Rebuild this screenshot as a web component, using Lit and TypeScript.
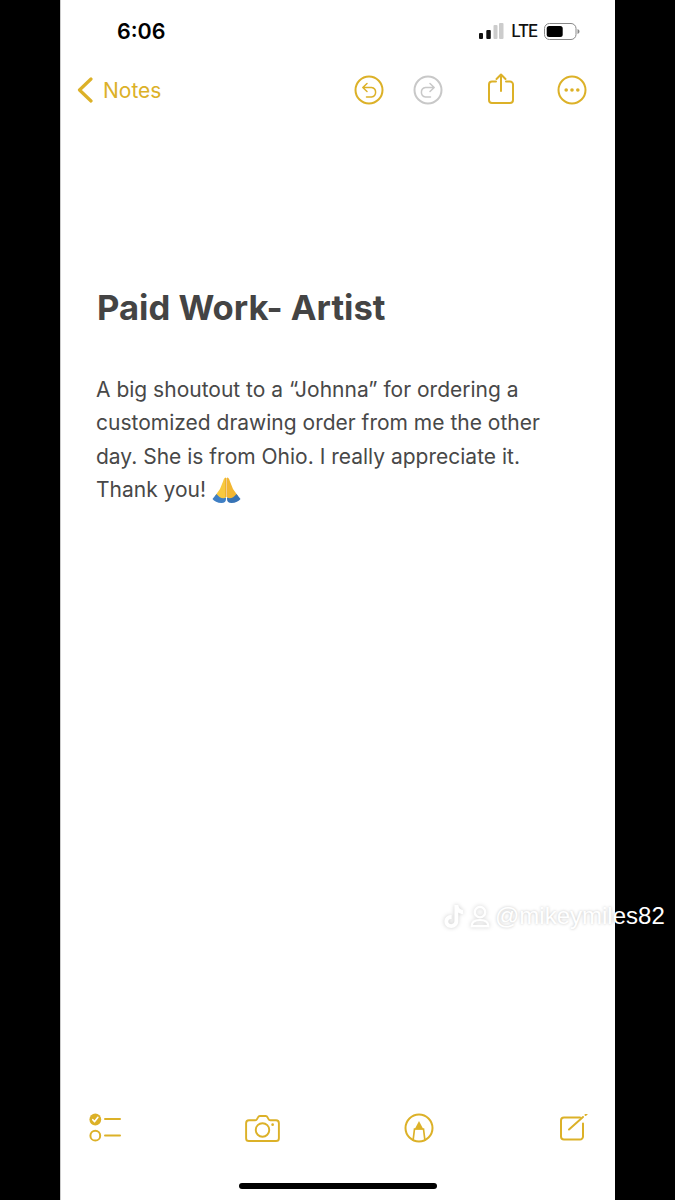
import { LitElement, html, css, svg } from "lit";
import { customElement } from "lit/decorators.js";

const G = "#dcb128";

@customElement("app-root")
export class AppRoot extends LitElement {
  static styles = css`
    :host { display: block; position: relative; width: 675px; height: 1200px; background: #000; overflow: hidden; font-family: Inter, "Liberation Sans", sans-serif; }
    svg { display: block; flex: none; }
    .screen { width: 555px; height: 1200px; margin-left: 60px; background: #fff; display: flex; flex-direction: column; border-left: 1px solid #ccc; box-sizing: border-box; }
    .status { height: 62px; display: flex; align-items: center; padding: 0 35px 0 56px; flex: none; }
    .time { font-size: 21.5px; font-weight: 600; color: #000; }
    .sright { margin-left: auto; display: flex; align-items: center; }
    .lte { font-size: 17px; font-weight: 500; color: #111; margin: 0 7px; letter-spacing: -1.2px; }
    .nav { height: 56px; display: flex; align-items: center; padding: 0 28px 0 16px; flex: none; }
    .notes { font-size: 21px; color: #dcb128; margin-left: 10px; }
    .navicons { margin-left: auto; display: flex; align-items: center; }
    .m1 { margin-left: 29px; }
    .m2 { margin-left: 45px; margin-bottom: 4px; }
    .m3 { margin-left: 43px; }
    main { padding-left: 35px; color: #484848; }
    h1 { margin: 169px 0 0; padding-left: 1px; font-size: 34.6px; line-height: 40px; font-weight: 700; color: #444; }
    p { margin: 46px 0 0; font-size: 21px; line-height: 33.3px; white-space: nowrap; }
    svg.pray { display: inline-block; vertical-align: -6px; margin-left: 0; }
    .toolbar { margin-top: auto; display: flex; align-items: center; justify-content: space-between; padding: 0 27px 0 28px; }
    .home { margin: 40px auto 11px; width: 198px; height: 6px; border-radius: 3px; background: #000; flex: none; }
    .mark { position: absolute; left: 443px; top: 902px; display: flex; align-items: center; gap: 5px; color: #fff; font-family: "Liberation Sans", sans-serif; font-size: 24px; text-shadow: 0 0 3px rgba(0,0,0,0.25); }
    .mark svg { filter: drop-shadow(0 0 2px rgba(0,0,0,0.2)); }
    .mark .person { margin-left: 1px; }
  `;

  render() {
    return html`
      <div class="screen">
        <div class="status">
          <span class="time">6:06</span>
          <div class="sright">
            <svg width="25" height="16" viewBox="0 0 25 16">
              <rect x="0" y="10" width="4" height="6" rx="1" fill="#111"/>
              <rect x="7.300" y="7" width="4.500" height="9" rx="1" fill="#111"/>
              <rect x="14.500" y="2" width="4" height="14" rx="1" fill="#ccc"/>
              <rect x="20" y="0" width="4.500" height="16" rx="1" fill="#ccc"/>
            </svg>
            <span class="lte">LTE</span>
            <svg width="36" height="17" viewBox="0 0 36 17">
              <rect x=".5" y=".5" width="31.500" height="16" rx="5" fill="none" stroke="#888"/>
              <rect x="2.700" y="3" width="16" height="11" rx="2.500" fill="#000"/>
              <path d="M33.500 6v5c1.200-.4 2-1.400 2-2.500s-.8-2.100-2-2.500z" fill="#888"/>
            </svg>
          </div>
        </div>
        <div class="nav">
          <svg width="16" height="26" viewBox="0 0 16 26" fill="none" stroke=${G} stroke-width="3.200" stroke-linecap="round" stroke-linejoin="round"><path d="M14 2 2.500 13 14 24"/></svg>
          <span class="notes">Notes</span>
          <div class="navicons">
            <svg width="30" height="30" viewBox="0 0 30 30" fill="none" stroke=${G} stroke-width="2"><circle cx="15" cy="15" r="13.500"/><path d="M13 8.500 8.800 12.500 13 16.500M9 12.500h8.500a4.800 4.800 0 0 1 0 9.500H12.500" stroke-width="1.500" stroke-linecap="round" stroke-linejoin="round"/></svg>
            <svg class="m1" width="30" height="30" viewBox="0 0 30 30" fill="none" stroke="#c8c8c8" stroke-width="2"><circle cx="15" cy="15" r="13.500"/><path d="M17 8.500 21.200 12.500 17 16.500M21 12.500h-8.500a4.800 4.800 0 0 0 0 9.500H17.500" stroke-width="1.500" stroke-linecap="round" stroke-linejoin="round"/></svg>
            <svg class="m2" width="26" height="31" viewBox="0 0 26 31" fill="none" stroke=${G} stroke-width="2" stroke-linecap="round" stroke-linejoin="round"><path d="M8 8.500H4A3 3 0 0 0 1 11.500v15.500a3 3 0 0 0 3 3h18a3 3 0 0 0 3-3V11.500a3 3 0 0 0-3-3h-4"/><path d="M13 18V1.500M8.500 6 13 1.500 17.500 6"/></svg>
            <svg class="m3" width="30" height="30" viewBox="0 0 30 30" fill="none" stroke=${G} stroke-width="2"><circle cx="15" cy="15" r="13.500"/><circle cx="9.200" cy="15" r="1.800" fill=${G} stroke="none"/><circle cx="15" cy="15" r="1.800" fill=${G} stroke="none"/><circle cx="20.800" cy="15" r="1.800" fill=${G} stroke="none"/></svg>
          </div>
        </div>
        <main>
          <h1>Paid Work- Artist</h1>
          <p>A big shoutout to a “Johnna” for ordering a<br>customized drawing order from me the other<br>day. She is from Ohio. I really appreciate it.<br>Thank you! <svg class="pray" width="29" height="26" viewBox="0 0 29 26">${svg`
            <path d="M14 0.500 C12.500 0.500 11.800 2 11.200 4 L8 12 L3 19 L10 25 L14 20Z" fill="#f8c93f"/>
            <path d="M15 0.500 C16.500 0.500 17.200 2 17.800 4 L21 12 L26 19 L19 25 L15 20Z" fill="#f2b632"/>
            <path d="M14 1 L14 20" stroke="#e39a22" stroke-width="1"/>
            <path d="M4.500 17 L0.500 22 C2 24 5.500 26 9.500 26 C12.500 26 14 24.500 14 22 L14 20.500 C11 22 7.500 21 4.500 17Z" fill="#3f7fc4"/>
            <path d="M24.500 17 L28.500 22 C27 24 23.500 26 19.500 26 C16.500 26 15 24.500 15 22 L15 20.500 C18 22 21.500 21 24.500 17Z" fill="#3773b5"/>`}</svg></p>
        </main>
        <div class="toolbar">
          <svg width="32" height="30" viewBox="0 0 32 30" fill="none" stroke=${G} stroke-width="2" stroke-linecap="round">
            <circle cx="6.300" cy="6.500" r="5.900" fill=${G} stroke="none"/><path d="M3.800 6.700 5.600 8.600 8.900 4.300" stroke="#fff" stroke-width="1.600" stroke-linejoin="round"/>
            <path d="M16 6H31"/><circle cx="6.300" cy="22.700" r="4.900"/><path d="M16 22.500H31"/>
          </svg>
          <svg width="35" height="27" viewBox="0 0 36 28" fill="none" stroke=${G} stroke-width="2" stroke-linejoin="round">
            <path d="M4 5.500h6.500c1 0 1.500-.5 2-1.500l.8-1.500c.5-1 1-1.500 2-1.500h6c1 0 1.500.5 2 1.500l.8 1.500c.5 1 1 1.500 2 1.500H32c2 0 3 1 3 3V24c0 2-1 3-3 3H4c-2 0-3-1-3-3V8.500c0-2 1-3 3-3z"/>
            <circle cx="18" cy="15.500" r="7"/><circle cx="28.500" cy="10" r="1.400" fill=${G} stroke="none"/>
          </svg>
          <svg width="30" height="30" viewBox="0 0 30 30" fill="none" stroke=${G} stroke-width="2">
            <circle cx="15" cy="15" r="13.500"/><path d="M9 28 10.500 16H19.500L21 28" stroke-width="1.700"/><path d="M15 8 10.500 16.500H19.500Z" fill=${G} stroke="none"/>
          </svg>
          <svg width="30" height="29" viewBox="0 0 30 29" fill="none" stroke=${G} stroke-width="2" stroke-linecap="round">
            <path d="M22 3.500H6a3 3 0 0 0-3 3v16a3 3 0 0 0 3 3h16a3 3 0 0 0 3-3V9.500"/>
            <path d="M11 15.500 25 3"/><path d="M27.500 1 28.500 .2"/>
          </svg>
        </div>
        <div class="home"></div>
      </div>
      <div class="mark">
        <svg width="21" height="25" viewBox="0 0 22 26" fill="#fff"><path d="M12 1h4c.3 3 2 5 5 5.400v4c-2 0-3.700-.6-5-1.600v9c0 4.500-3.300 7.200-7.300 7.200S1.500 22 1.500 18.200 4.700 11 9 11.400v4.300c-2-.5-3.500.7-3.500 2.500S7 21 8.700 21 12 19.800 12 17.800z"/></svg>
        <svg class="person" width="20" height="25" viewBox="0 0 23 26" fill="none" stroke="#fff" stroke-width="2.500"><circle cx="11.500" cy="8" r="6"/><path d="M2 24c0-5 4-7 9.500-7s9.500 2 9.500 7z"/></svg>
        <span>@mikeymiles82</span>
      </div>
    `;
  }
}
